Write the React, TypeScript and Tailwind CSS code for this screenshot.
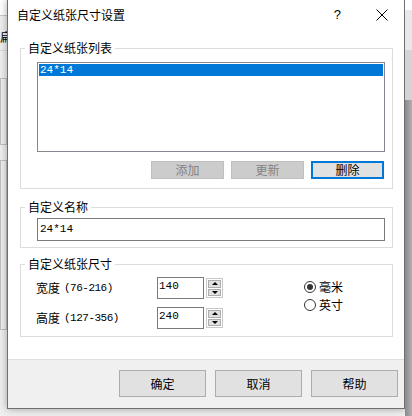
import React from "react"

const cjk = "font-['Microsoft_YaHei','Noto_Sans_CJK_SC',sans-serif]"
const mono = "font-['Liberation_Mono','Noto_Sans_CJK_SC',monospace]"

function Group({ label, className, children }: { label: string; className?: string; children: React.ReactNode }) {
  return (
    <div className={`relative border border-[#dcdcdc] ${className ?? ""}`}>
      <span className="absolute -top-[9px] left-[4px] bg-white px-[3px] text-[12px] leading-[16px] text-black">{label}</span>
      {children}
    </div>
  )
}

function Spinner() {
  return (
    <div className="flex h-[20px] w-[17px] flex-col gap-[1px] border border-[#c8c8c8] bg-white p-[1px]">
      <div className="flex flex-1 items-center justify-center border border-[#adadad] bg-[#e1e1e1]">
        <div className="h-0 w-0 border-x-[3px] border-b-[3px] border-x-transparent border-b-black" />
      </div>
      <div className="flex flex-1 items-center justify-center border border-[#adadad] bg-[#e1e1e1]">
        <div className="h-0 w-0 border-x-[3px] border-t-[3px] border-x-transparent border-t-black" />
      </div>
    </div>
  )
}

function Radio({ checked, label }: { checked?: boolean; label: string }) {
  return (
    <div className="flex h-[18px] items-center gap-[3px]">
      <div className="flex h-[12px] w-[12px] items-center justify-center rounded-full border border-[#333] bg-white">
        {checked && <div className="h-[6px] w-[6px] rounded-full bg-[#333]" />}
      </div>
      <span className="text-[12px] leading-[16px]">{label}</span>
    </div>
  )
}

export default function App() {
  return (
    <div className={`flex h-[416px] w-[412px] overflow-hidden bg-[#f0f0f0] ${cjk}`}>
      {/* background app, left edge */}
      <div className="flex w-[7px] flex-col bg-[#f0f0f0]">
        <div className="h-[15px] bg-white" />
        <div className="h-[1px] bg-[#c8c8c8]" />
        <div className="mt-[14px] h-[14px] overflow-hidden text-[12px] leading-[14px] text-black">扁</div>
        <div className="mt-[6px] h-[1px] bg-[#dcdcdc]" />
        <div className="mt-[27px] h-[67px] border border-[#c0c0c0]" />
        <div className="mt-[15px] h-[170px] border border-[#c0c0c0]" />
      </div>

      {/* dialog */}
      <div className="flex h-[409px] w-[398px] flex-col border-x border-b border-[#6f6f6f] bg-white text-black shadow-[0_0_8px_rgba(0,0,0,0.35)]">
        <div className="flex h-[30px] items-center pl-[9px]">
          <span className="text-[12px] leading-[16px]">自定义纸张尺寸设置</span>
          <span className="ml-auto mr-[35px] text-[13px] font-['Liberation_Sans',sans-serif]">?</span>
          <svg width="12" height="12" viewBox="0 0 12 12" className="mr-[16px]">
            <path d="M0.5 0.5L11.5 11.5M11.5 0.5L0.5 11.5" stroke="#000" strokeWidth="1" />
          </svg>
        </div>

        <div className="ml-[12px] mr-[11px]">
          <Group label="自定义纸张列表" className="mt-[18px] pb-[9px] pl-[16px] pr-[7px] pt-[13px]">
            <div className="h-[90px] border border-[#828790] bg-white p-[1px]">
              <div className={`h-[12px] bg-[#0078d7] pl-[1px] text-[11px] leading-[12px] text-white ${mono}`}>24*14</div>
            </div>
            <div className="mt-[9px] flex justify-end gap-[7px] pr-[1px]">
              <div className="flex h-[18px] w-[73px] items-center justify-center border border-[#bfbfbf] bg-[#cccccc] text-[12px] text-[#838383]">添加</div>
              <div className="flex h-[18px] w-[73px] items-center justify-center border border-[#bfbfbf] bg-[#cccccc] text-[12px] text-[#838383]">更新</div>
              <div className="flex h-[18px] w-[73px] items-center justify-center border-2 border-[#0078d7] bg-[#e1e1e1] text-[12px] text-black">删除</div>
            </div>
          </Group>

          <Group label="自定义名称" className="mt-[18px] pb-[6px] pl-[16px] pr-[7px] pt-[10px]">
            <div className={`flex h-[23px] items-center border border-[#7a7a7a] bg-white pl-[2px] text-[11px] ${mono}`}>24*14</div>
          </Group>

          <Group label="自定义纸张尺寸" className="mt-[16px] flex pb-[7px] pl-[15px] pt-[12px]">
            <div className="flex flex-col gap-[8px]">
              {[
                ["宽度", "(76-216)", "140"],
                ["高度", "(127-356)", "240"],
              ].map(([a, b, v]) => (
                <div key={a} className="flex h-[22px] items-center">
                  <div className="flex w-[121px] items-center">
                    <span className="text-[12px]">{a}</span>
                    <span className={`ml-[4px] text-[11px] tracking-[-0.5px] ${mono}`}>{b}</span>
                  </div>
                  <div className={`flex h-[22px] w-[47px] items-start border border-[#7a7a7a] bg-white pl-[1px] pt-[2px] text-[11px] leading-[13px] ${mono}`}>{v}</div>
                  <div className="ml-[2px]">
                    <Spinner />
                  </div>
                </div>
              ))}
            </div>
            <div className="ml-[81px] flex flex-col pt-[1px]">
              <Radio checked label="毫米" />
              <Radio label="英寸" />
            </div>
          </Group>
        </div>

        <div className="mt-auto flex h-[49px] justify-end gap-[9px] border-t border-[#dfdfdf] bg-[#f0f0f0] pr-[6px] pt-[10px]">
          {["确定", "取消", "帮助"].map((t) => (
            <div key={t} className="flex h-[27px] w-[87px] items-center justify-center border border-[#adadad] bg-[#e1e1e1] text-[12px]">{t}</div>
          ))}
        </div>
      </div>

      {/* background app, right edge */}
      <div className="flex flex-1 flex-col">
        <div className="h-[10px] bg-white" />
        <div className="h-[40px] bg-[#e8e8e8]" />
        <div className="h-[50px] bg-[#d4d4d4]" />
        <div className="flex-1 bg-gradient-to-r from-[#8a8a8a] to-[#b0b0b0]" />
      </div>
    </div>
  )
}
